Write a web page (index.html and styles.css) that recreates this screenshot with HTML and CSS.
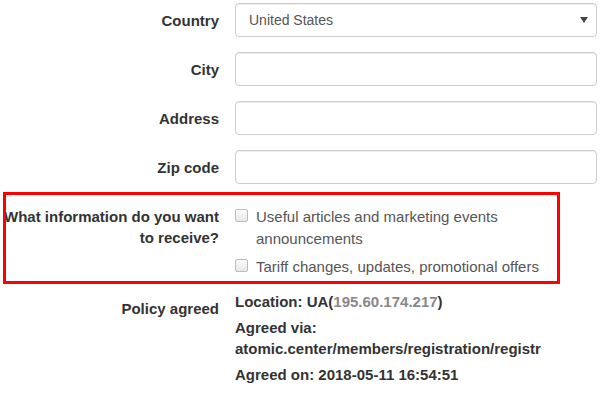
FILE: index.html
```html
<!DOCTYPE html>
<html lang="en">
<head>
    <meta charset="UTF-8">
    <meta name="viewport" content="width=device-width, initial-scale=1.0">
    <title>Profile</title>
    <link rel="stylesheet" href="styles.css">
</head>
<body>
    <form class="form">
        <div class="group">
            <label class="label">Country</label>
            <div class="field">
                <div class="select">
                    <span>United States</span>
                    <span class="caret"></span>
                </div>
            </div>
        </div>
        <div class="group">
            <label class="label">City</label>
            <div class="field"><input class="input" type="text"></div>
        </div>
        <div class="group">
            <label class="label">Address</label>
            <div class="field"><input class="input" type="text"></div>
        </div>
        <div class="group">
            <label class="label">Zip code</label>
            <div class="field"><input class="input" type="text"></div>
        </div>
        <div class="group marked">
            <label class="label">What information do you want to receive?</label>
            <div class="field checks">
                <label class="check"><input type="checkbox"><span>Useful articles and marketing events announcements</span></label>
                <label class="check"><input type="checkbox"><span>Tariff changes, updates, promotional offers</span></label>
            </div>
        </div>
        <div class="group">
            <label class="label">Policy agreed</label>
            <div class="field policy">
                <p>Location: UA(<span class="ip">195.60.174.217</span>)</p>
                <p>Agreed via: atomic.center/members/registration/registr</p>
                <p>Agreed on: 2018-05-11 16:54:51</p>
            </div>
        </div>
    </form>
</body>
</html>
```

FILE: styles.css
```css
body {
    margin: 0;
    background: #fff;
    color: #333;
    font-family: "Liberation Sans", Arial, sans-serif;
    font-size: 14px;
    line-height: 1.43;
}

.form {
    padding: 3px 3px 0 0;
}

.group {
    display: grid;
    grid-template-columns: 219px 1fr;
    column-gap: 16px;
    margin-bottom: 15px;
}

.label {
    padding-top: 7px;
    text-align: right;
    font-weight: 700;
    font-size: 15px;
    line-height: 21px;
}

.select,
.input {
    box-sizing: border-box;
    width: 100%;
    height: 34px;
    border: 1px solid #ccc;
    border-radius: 4px;
    box-shadow: inset 0 1px 1px rgba(0, 0, 0, .075);
    background: #fff;
}

.select {
    display: flex;
    align-items: center;
    justify-content: space-between;
    padding: 0 8px 0 13px;
    color: #555;
    font-size: 14px;
}

.caret {
    width: 0;
    height: 0;
    border-left: 4px solid transparent;
    border-right: 4px solid transparent;
    border-top: 6px solid #444;
}

/* red annotation frame */
.marked {
    position: relative;
    margin-top: -7px;
    margin-bottom: 7px;
    padding-top: 7px;
}
.marked::after {
    content: "";
    position: absolute;
    left: 3px;
    top: 0;
    width: 557px;
    height: 92px;
    box-sizing: border-box;
    border: 3px solid #f00;
    pointer-events: none;
}

.checks {
    padding-top: 7px;
}

.check {
    display: flex;
    align-items: flex-start;
    gap: 8px;
    margin-bottom: 6px;
    color: #555;
    font-size: 15px;
    line-height: 22px;
}

.check input {
    flex: none;
    width: 13px;
    height: 13px;
    margin: 3px 0 0;
    appearance: none;
    border: 1px solid #bbb;
    border-radius: 2px;
    background: linear-gradient(#fafafa, #e9e9e9);
}

.policy {
    font-weight: 700;
    font-size: 15px;
    line-height: 21px;
}

.policy p {
    margin: 0 0 5px;
}

.ip {
    color: #888;
}
```
